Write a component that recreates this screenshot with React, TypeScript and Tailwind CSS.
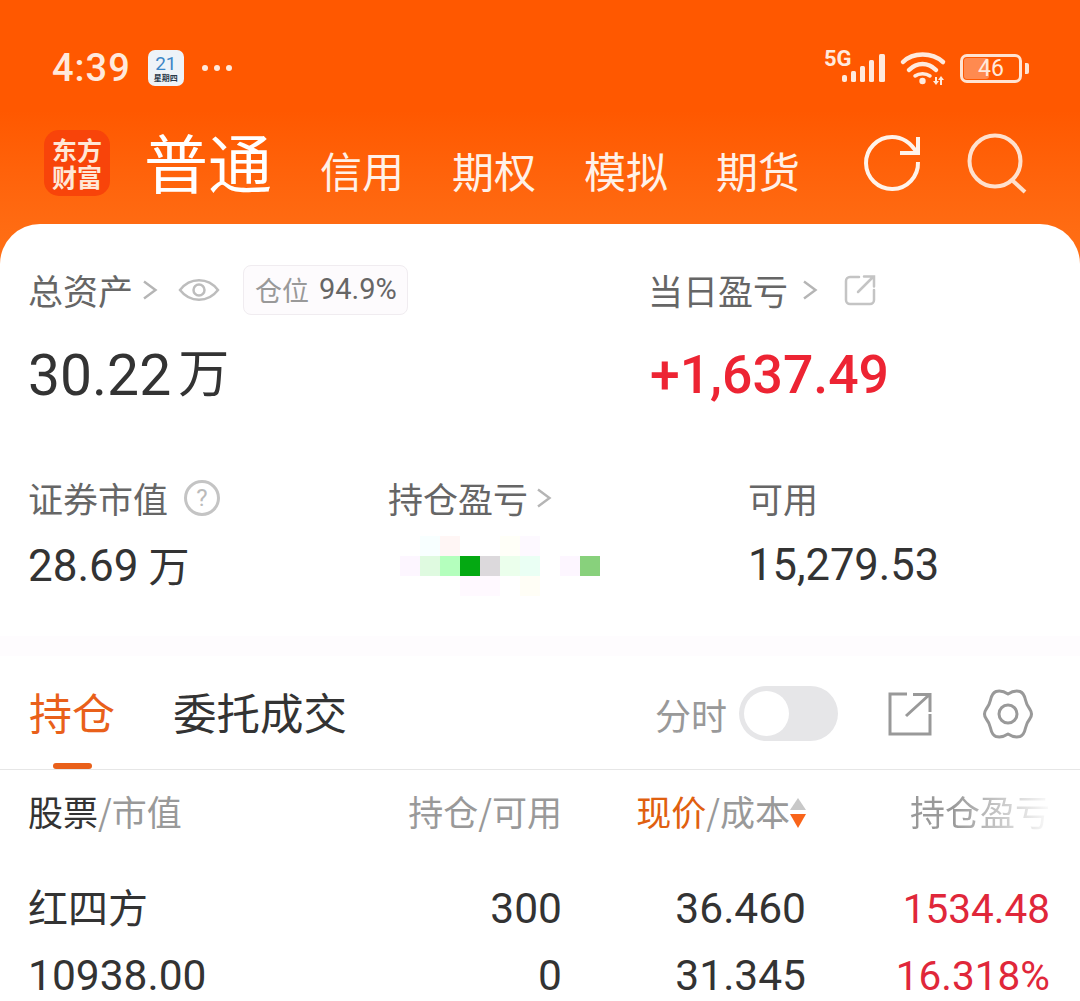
const cjk = "font-['Noto_Sans_CJK_SC','Noto_Sans',sans-serif]";
const num = "font-['Roboto','Noto_Sans_CJK_SC',sans-serif]";

// mosaic cells that cover the holding profit figure
const mosaic: string[][] = [
  ["#ffffff", "#f8ffff", "#fff6f5", "#ffffff", "#ffffff", "#fffff8", "#fdf9ff", "#ffffff", "#ffffff", "#ffffff"],
  ["#fdf6ff", "#dffae0", "#b4ffbd", "#04a912", "#dcd9dc", "#ebffec", "#eafff4", "#ffffff", "#fdf6ff", "#88d17c"],
  ["#ffffff", "#ffffff", "#ffffff", "#fff9ff", "#fff9ff", "#ffffff", "#fffef6", "#ffffff", "#ffffff", "#ffffff"],
];

function Chevron({ className = "" }: { className?: string }) {
  return (
    <svg viewBox="0 0 16 24" className={`w-[16px] h-[24px] shrink-0 ${className}`} fill="none" stroke="#b5b5b5" strokeWidth="2.4">
      <path d="M2 3.5 13.5 12 2 20.5" />
    </svg>
  );
}

function SignalIcon() {
  return (
    <div className="relative w-[62px] h-[36px]">
      <span className={`absolute left-0 top-[-2px] text-[22px] leading-none font-bold text-[#ffeadd] ${num}`}>5G</span>
      <svg viewBox="0 0 62 36" className="w-[62px] h-[36px]" fill="#ffeadd">
        <rect x="18" y="25" width="5" height="7" rx="2" />
        <rect x="27" y="21" width="5" height="11" rx="1.5" />
        <rect x="36" y="16" width="5" height="16" rx="1.5" />
        <rect x="45" y="10" width="5" height="22" rx="1.5" />
        <rect x="55" y="4" width="6" height="28" rx="1.5" />
      </svg>
    </div>
  );
}

function WifiIcon() {
  return (
    <svg viewBox="0 0 48 36" className="w-[48px] h-[36px]" fill="none" stroke="#ffeadd" strokeLinecap="round" strokeWidth="4.5">
      <path d="M4 12C14 2 33 2 44 12" />
      <path d="M10 20C18 12 29 12 37 20" />
      <path d="M16 26c4-3 11-3 15 0" strokeWidth="3.5" />
      <circle cx="23.500" cy="31" r="3.200" fill="#ffeadd" stroke="none" />
      <path d="M37 27v5M42 29v6" strokeWidth="2" strokeLinecap="butt" />
      <path d="M34 31h6l-3 4ZM39 30l3-4 3 4Z" fill="#ffeadd" stroke="none" />
    </svg>
  );
}

function Battery() {
  return (
    <div className="flex items-center gap-[3px]">
      <div className={`relative w-[62px] h-[29px] rounded-[7px] border-[3px] border-[#ffe3d2] flex items-center justify-center ${num}`}>
        <div className="absolute left-[1px] top-[1px] bottom-[1px] w-[25px] rounded-[3px] bg-[#ff8a50]" />
        <span className="relative text-[23px] leading-none text-[#ffe9dc]">46</span>
      </div>
      <div className="w-[4px] h-[11px] rounded-r-[2px] bg-[#ffe3d2]" />
    </div>
  );
}

function StatusBar() {
  return (
    <div className="h-[74px] pl-[52px] pr-[51px] flex items-center justify-between">
      <div className="flex items-center">
        <span className={`text-[38px] leading-none text-[#ffe9dc] font-medium tracking-[1px] ${num}`}>4:39</span>
        <div className="ml-[17px] w-[36px] h-[36px] rounded-[7px] bg-[#eef3f8] flex flex-col items-center justify-center">
          <span className={`text-[19px] leading-[19px] text-[#3d86c6] ${num}`}>21</span>
          <span className={`text-[8px] leading-[9px] font-bold text-[#2b3a4a] ${cjk}`}>星期四</span>
        </div>
        <div className="ml-[18px] flex gap-[6px]">
          <span className="w-[6px] h-[6px] rounded-full bg-[#ffe9dc]" />
          <span className="w-[6px] h-[6px] rounded-full bg-[#ffe9dc]" />
          <span className="w-[6px] h-[6px] rounded-full bg-[#ffe9dc]" />
        </div>
      </div>
      <div className="flex items-center gap-[13px]">
        <SignalIcon />
        <WifiIcon />
        <Battery />
      </div>
    </div>
  );
}

function TopNav() {
  return (
    <div className="mt-[17px] h-[82px] pl-[44px] flex items-center whitespace-nowrap">
      <div className="w-[66px] h-[66px] shrink-0 rounded-[15px] bg-[#f8440a] text-[#ffe7d6] flex flex-col items-center justify-center font-['Noto_Sans_CJK_SC',sans-serif] font-bold text-[25px] leading-[27px]">
        <span>东方</span>
        <span>财富</span>
      </div>
      <span className={`ml-[34px] mb-[6px] text-[64px] leading-none text-white ${cjk}`}>普通</span>
      <div className={`ml-[48px] mt-[14px] flex gap-[48px] text-[42px] leading-none text-[#fff1e8] ${cjk}`}>
        <span>信用</span>
        <span>期权</span>
        <span>模拟</span>
        <span>期货</span>
      </div>
      <svg viewBox="0 0 60 60" className="ml-[62px] w-[60px] h-[60px] shrink-0" fill="none" stroke="#fff3ea" strokeWidth="4">
        <path d="M56 29A26 26 0 1 1 30 4c10 0 19 6 25 16" />
        <path d="M56 4V20H38" />
      </svg>
      <svg viewBox="0 0 62 62" className="ml-[44px] w-[62px] h-[62px] shrink-0" fill="none" stroke="#ffe0cd" strokeWidth="4">
        <circle cx="29" cy="29" r="25.500" />
        <path d="M47 49l12 11" />
      </svg>
    </div>
  );
}

function SummaryCard() {
  return (
    <div className="pl-[28px] pr-[30px]">
      <div className="pt-[41px] flex">
        <div className="w-[620px]">
          <div className={`h-[50px] flex items-center text-[35px] text-[#666] ${cjk}`}>
            <span>总资产</span>
            <Chevron className="ml-[9px]" />
            <svg viewBox="0 0 42 30" className="ml-[20px] w-[42px] h-[30px]" fill="none" stroke="#bdbdbd" strokeWidth="2.500">
              <path d="M2 15C12 2 30 2 40 15 30 28 12 28 2 15Z" />
              <circle cx="21" cy="15" r="5.500" />
            </svg>
            <div className="ml-[23px] w-[165px] h-[50px] rounded-[8px] border border-[#f0ecf0] bg-[#fdfbfd] flex items-center pl-[11px]">
              <span className="text-[27px] text-[#999]">仓位</span>
              <span className={`ml-[10px] text-[29px] text-[#666] ${num}`}>94.9%</span>
            </div>
          </div>
          <div className={`mt-[34px] flex items-center h-[52px] text-[#333] ${num}`}>
            <span className="text-[57px] leading-none font-[450]">30.22</span>
            <span className={`ml-[7px] mb-[9px] text-[51px] leading-none ${cjk}`}>万</span>
          </div>
        </div>
        <div>
          <div className={`h-[50px] flex items-center text-[35px] text-[#666] ${cjk}`}>
            <span>当日盈亏</span>
            <Chevron className="ml-[14px]" />
            <svg viewBox="0 0 32 32" className="ml-[26px] w-[32px] h-[32px]" fill="none" stroke="#c4c4c4" strokeWidth="2.500" strokeLinecap="round">
              <path d="M15 3H6a4 4 0 0 0-4 4v19a4 4 0 0 0 4 4h20a4 4 0 0 0 4-4v-10" />
              <path d="M14 18 29 3M20 2.500h10v10" />
            </svg>
          </div>
          <div className={`mt-[34px] ml-[2px] h-[52px] flex items-center text-[53.5px] leading-none font-medium text-[#ed2433] ${num}`}>
            +1,637.49
          </div>
        </div>
      </div>
      <div className="mt-[74px] grid grid-cols-[360px_360px_1fr]">
        <div>
          <div className={`h-[46px] flex items-center text-[35px] text-[#666] ${cjk}`}>
            <span>证券市值</span>
            <span className={`ml-[16px] w-[36px] h-[36px] rounded-full border-[3px] border-[#c4c4c4] text-[#bbb] text-[24px] flex items-center justify-center ${num}`}>?</span>
          </div>
          <div className={`mt-[23px] h-[44px] flex items-center text-[#333] ${num}`}>
            <span className="text-[44px] leading-none">28.69</span>
            <span className={`ml-[10px] mb-[4px] text-[41px] leading-none ${cjk}`}>万</span>
          </div>
        </div>
        <div>
          <div className={`h-[46px] flex items-center text-[35px] text-[#666] ${cjk}`}>
            <span>持仓盈亏</span>
            <Chevron className="ml-[8px]" />
          </div>
          <div className="mt-[15px] ml-[12px] flex flex-col">
            {mosaic.map((row, i) => (
              <div key={i} className="flex">
                {row.map((c, j) => (
                  <div key={j} className="w-[20px] h-[20px]" style={{ backgroundColor: c }} />
                ))}
              </div>
            ))}
          </div>
        </div>
        <div>
          <div className={`h-[46px] flex items-center text-[35px] text-[#666] ${cjk}`}>可用</div>
          <div className={`mt-[23px] h-[44px] flex items-center text-[43.5px] leading-none text-[#333] ${num}`}>15,279.53</div>
        </div>
      </div>
    </div>
  );
}

function TabBar() {
  return (
    <div className={`mt-[40px] border-t-[20px] border-[#fefcfe] border-b border-b-[#e6e6e6] h-[134px] pl-[29px] pr-[46px] flex ${cjk}`}>
      <div className="relative h-[113px] pt-[34px]">
        <span className="text-[43px] leading-none text-[#e9601a]">持仓</span>
        <div className="absolute left-[24px] bottom-0 w-[39px] h-[6px] rounded-full bg-[#e9601a]" />
      </div>
      <div className="ml-[58px] pt-[34px] text-[43.5px] leading-none text-[#333]">委托成交</div>
      <div className="ml-auto h-[113px] pt-[2px] flex items-center">
        <span className="text-[36px] text-[#999]">分时</span>
        <div className="ml-[12px] w-[99px] h-[55px] rounded-full bg-[#e6e6e8] flex items-center pl-[5px]">
          <div className="w-[45px] h-[45px] rounded-full bg-white" />
        </div>
        <svg viewBox="0 0 44 44" className="ml-[50px] w-[44px] h-[44px]" fill="none" stroke="#999" strokeWidth="3">
          <path d="M19 2H2v40h40V22" />
          <path d="M18 24 41 3M25 2.500h17V20" />
        </svg>
        <svg viewBox="0 0 52 52" className="ml-[50px] w-[52px] h-[52px]" fill="none" stroke="#999" strokeWidth="3" strokeLinejoin="round">
          <path d="M26 6Q32 2 38 3.500Q42 5 43.500 12Q44.500 17 48 21.500Q51 26 48 30.500Q44.500 35 43.500 40Q42 47 38 48.500Q32 50 26 46Q20 50 14 48.500Q10 47 8.500 40Q7.500 35 4 30.500Q1 26 4 21.500Q7.500 17 8.500 12Q10 5 14 3.500Q20 2 26 6Z" />
          <circle cx="26" cy="26" r="9" />
        </svg>
      </div>
    </div>
  );
}

function HoldingsTable() {
  return (
    <div className="pl-[28px] pr-[30px]">
      <div className={`mt-[15px] h-[44px] grid grid-cols-[290px_244px_244px_1fr] items-center text-[35px] ${cjk}`}>
        <div className="text-[#333]">
          股票<span className="text-[#999]">/市值</span>
        </div>
        <div className="text-right text-[#999]">持仓/可用</div>
        <div className="flex justify-end items-center text-[#999]">
          <span className="text-[#e0600f]">现价</span>/成本
          <span className="mt-[4px] flex flex-col gap-[4px]">
            <span className="block w-0 h-0 border-x-[8px] border-x-transparent border-b-[12px] border-b-[#c8c8c8]" />
            <span className="block w-0 h-0 border-x-[8px] border-x-transparent border-t-[14px] border-t-[#f9641a]" />
          </span>
        </div>
        <div className="text-right bg-linear-to-r from-[#999] from-60% to-[#fbfbfb] bg-clip-text text-transparent pl-[26px]">持仓盈亏</div>
      </div>
      <div className={`mt-[57px] h-[44px] grid grid-cols-[290px_244px_244px_1fr] items-center text-[42.5px] leading-none text-[#333] ${num}`}>
        <div className={`mb-[6px] text-[40px] ${cjk}`}>红四方</div>
        <div className="text-right">300</div>
        <div className="text-right">36.460</div>
        <div className="text-right text-[40.5px] text-[#e0273a]">1534.48</div>
      </div>
      <div className={`mt-[24px] h-[44px] grid grid-cols-[290px_244px_244px_1fr] items-center text-[42.5px] leading-none text-[#333] ${num}`}>
        <div>10938.00</div>
        <div className="text-right">0</div>
        <div className="text-right">31.345</div>
        <div className="text-right text-[40.5px] text-[#e0273a]">16.318%</div>
      </div>
    </div>
  );
}

export default function App() {
  return (
    <div className="w-[1080px] h-[1001px] overflow-hidden bg-linear-to-b from-[#ff5800] from-[110px] to-[#ff7016] to-[260px]">
      <div className="h-[224px] pt-[31px]">
        <StatusBar />
        <TopNav />
      </div>
      <div className="h-[777px] rounded-t-[40px] bg-white">
        <SummaryCard />
        <TabBar />
        <HoldingsTable />
      </div>
    </div>
  );
}
